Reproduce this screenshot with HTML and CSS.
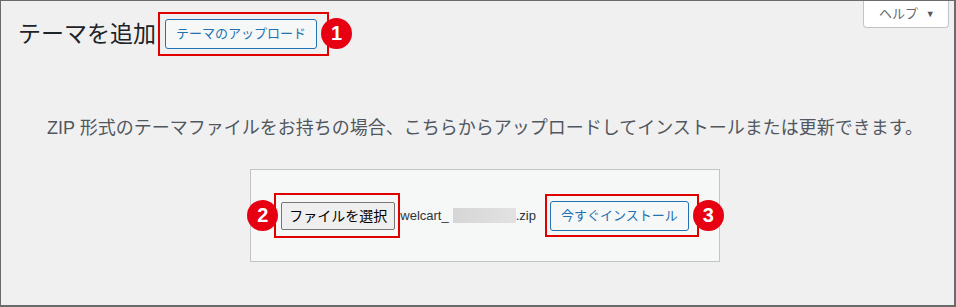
FILE: index.html
```html
<!doctype html>
<html lang="ja">
  <head>
    <meta charset="utf-8">
    <meta name="viewport" content="width=device-width, initial-scale=1">
    <title>テーマを追加</title>
    <link rel="stylesheet" href="styles.css">
  </head>
  <body>
    <div class="frame">
      <div class="header">
        <div class="title-row">
          <h1>テーマを追加</h1>
          <span class="mark mark-upload">
            <a class="btn" href="#">テーマのアップロード</a>
            <span class="badge badge-right">1</span>
          </span>
        </div>
        <div class="help-tab">ヘルプ <span class="arrow">▼</span></div>
      </div>

      <p class="install-help">ZIP 形式のテーマファイルをお持ちの場合、こちらからアップロードしてインストールまたは更新できます。</p>

      <div class="upload-form">
        <span class="mark mark-file">
          <span class="badge badge-left">2</span>
          <button class="file-btn">ファイルを選択</button>
        </span>
        <span class="file-name">welcart_<span class="blur"></span>.zip</span>
        <span class="mark mark-install">
          <a class="btn" href="#">今すぐインストール</a>
          <span class="badge badge-right">3</span>
        </span>
      </div>
    </div>
  </body>
</html>
```

FILE: styles.css
```css
html, body {
  margin: 0;
  padding: 0;
}
body {
  background: #f0f0f1;
  font-family: "Liberation Sans", "Noto Sans CJK JP", sans-serif;
  color: #1d2327;
}
.frame {
  box-sizing: border-box;
  width: 956px;
  height: 307px;
  border-style: solid;
  border-color: #6b6b6b;
  border-width: 1px 2px 2px 1px;
  padding: 0 2px 0 17px;
}
.header {
  display: flex;
  justify-content: space-between;
  align-items: flex-start;
}
.title-row {
  display: flex;
  align-items: center;
  margin-top: 11px;
}
h1 {
  font-size: 23px;
  font-weight: 400;
  line-height: 30px;
  margin: 0 2px 0 0;
  color: #1d2327;
}
.mark {
  position: relative;
  display: inline-flex;
  align-items: center;
  border: 2px solid #e00000;
}
.mark-upload {
  padding: 5px 10px 5px 5px;
}
.mark-file {
  padding: 7px 3px 6px 5px;
}
.mark-install {
  padding: 5px 8px 4px 3px;
  margin-left: 9px;
}
.badge {
  position: absolute;
  top: 50%;
  width: 31px;
  height: 31px;
  margin-top: -16px;
  border-radius: 50%;
  background: #e60012;
  color: #fff;
  font-family: "Liberation Sans", sans-serif;
  font-weight: bold;
  font-size: 20px;
  line-height: 31px;
  text-align: center;
}
.badge-right {
  left: calc(100% - 6px);
}
.mark-install .badge-right {
  left: calc(100% - 4px);
}
.badge-left {
  right: calc(100% - 2px);
}
.btn {
  display: inline-block;
  box-sizing: border-box;
  height: 30px;
  line-height: 28px;
  padding: 0 10px;
  font-size: 13px;
  color: #2271b1;
  background: #f6f7f7;
  border: 1px solid #2271b1;
  border-radius: 3px;
  text-decoration: none;
}
.help-tab {
  box-sizing: border-box;
  width: 86px;
  height: 27px;
  margin-right: 3px;
  padding-left: 15px;
  background: #fff;
  border: 1px solid #c3c4c7;
  border-top: none;
  border-radius: 0 0 4px 4px;
  font-size: 13px;
  line-height: 26px;
  color: #646970;
}
.help-tab .arrow {
  font-size: 9px;
  color: #50575e;
  margin-left: 4px;
  vertical-align: 1px;
}
.install-help {
  margin: 58px 0 27px;
  font-size: 18px;
  line-height: 28px;
  color: #50575e;
  text-align: center;
}
.upload-form {
  display: flex;
  align-items: center;
  width: fit-content;
  margin: 0 auto;
  padding: 23px 20px 23px 23px;
  background: #f6f7f7;
  border: 1px solid #c3c4c7;
}
.file-btn {
  box-sizing: border-box;
  height: 28px;
  padding: 0 7px;
  font-family: "Liberation Sans", "Noto Sans CJK JP", sans-serif;
  font-size: 14px;
  line-height: 26px;
  color: #000;
  background: #efefef;
  border: 1px solid #767676;
  border-radius: 2px;
}
.file-name {
  display: inline-flex;
  align-items: center;
  font-size: 13px;
  color: #2c3338;
}
.blur {
  display: inline-block;
  width: 63px;
  height: 15px;
  margin-left: 4px;
  background: linear-gradient(90deg, #d6d6d6, #e2e2e2);
}
```
